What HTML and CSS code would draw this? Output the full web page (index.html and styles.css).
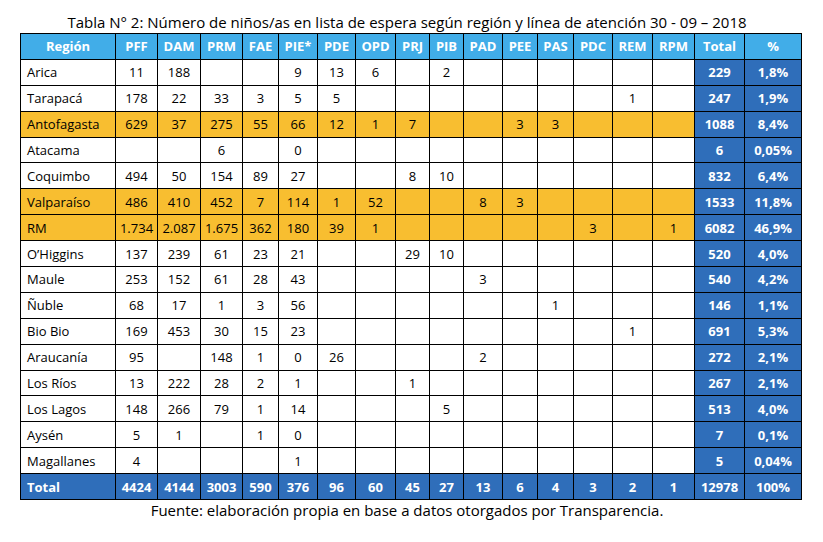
FILE: index.html
```html
<!DOCTYPE html>
<html lang="es">
<head>
<meta charset="utf-8">
<title>Tabla N° 2</title>
<link rel="stylesheet" href="styles.css">
</head>
<body>
<div class="page">
<p class="caption">Tabla N° 2: Número de niños/as en lista de espera según región y línea de atención 30 - 09 – 2018</p>
<table class="grid">
<colgroup>
<col class="c-reg"><col class="c42"><col class="c43"><col class="c42"><col class="c36"><col class="c39"><col class="c38"><col class="c40"><col class="c34"><col class="c34"><col class="c39"><col class="c35"><col class="c36"><col class="c39"><col class="c40"><col class="c42"><col class="c50"><col class="c57">
</colgroup>
<thead>
<tr class="head"><th>Región</th><th>PFF</th><th>DAM</th><th>PRM</th><th>FAE</th><th>PIE*</th><th>PDE</th><th>OPD</th><th>PRJ</th><th>PIB</th><th>PAD</th><th>PEE</th><th>PAS</th><th>PDC</th><th>REM</th><th>RPM</th><th>Total</th><th>%</th></tr>
</thead>
<tbody>
<tr><td class="reg">Arica</td><td>11</td><td>188</td><td></td><td></td><td>9</td><td>13</td><td>6</td><td></td><td>2</td><td></td><td></td><td></td><td></td><td></td><td></td><td class="tot">229</td><td class="tot">1,8%</td></tr>
<tr><td class="reg">Tarapacá</td><td>178</td><td>22</td><td>33</td><td>3</td><td>5</td><td>5</td><td></td><td></td><td></td><td></td><td></td><td></td><td></td><td>1</td><td></td><td class="tot">247</td><td class="tot">1,9%</td></tr>
<tr class="hl"><td class="reg">Antofagasta</td><td>629</td><td>37</td><td>275</td><td>55</td><td>66</td><td>12</td><td>1</td><td>7</td><td></td><td></td><td>3</td><td>3</td><td></td><td></td><td></td><td class="tot">1088</td><td class="tot">8,4%</td></tr>
<tr><td class="reg">Atacama</td><td></td><td></td><td>6</td><td></td><td>0</td><td></td><td></td><td></td><td></td><td></td><td></td><td></td><td></td><td></td><td></td><td class="tot">6</td><td class="tot">0,05%</td></tr>
<tr><td class="reg">Coquimbo</td><td>494</td><td>50</td><td>154</td><td>89</td><td>27</td><td></td><td></td><td>8</td><td>10</td><td></td><td></td><td></td><td></td><td></td><td></td><td class="tot">832</td><td class="tot">6,4%</td></tr>
<tr class="hl"><td class="reg">Valparaíso</td><td>486</td><td>410</td><td>452</td><td>7</td><td>114</td><td>1</td><td>52</td><td></td><td></td><td>8</td><td>3</td><td></td><td></td><td></td><td></td><td class="tot">1533</td><td class="tot">11,8%</td></tr>
<tr class="hl"><td class="reg">RM</td><td>1.734</td><td>2.087</td><td>1.675</td><td>362</td><td>180</td><td>39</td><td>1</td><td></td><td></td><td></td><td></td><td></td><td>3</td><td></td><td>1</td><td class="tot">6082</td><td class="tot">46,9%</td></tr>
<tr><td class="reg">O’Higgins</td><td>137</td><td>239</td><td>61</td><td>23</td><td>21</td><td></td><td></td><td>29</td><td>10</td><td></td><td></td><td></td><td></td><td></td><td></td><td class="tot">520</td><td class="tot">4,0%</td></tr>
<tr><td class="reg">Maule</td><td>253</td><td>152</td><td>61</td><td>28</td><td>43</td><td></td><td></td><td></td><td></td><td>3</td><td></td><td></td><td></td><td></td><td></td><td class="tot">540</td><td class="tot">4,2%</td></tr>
<tr><td class="reg">Ñuble</td><td>68</td><td>17</td><td>1</td><td>3</td><td>56</td><td></td><td></td><td></td><td></td><td></td><td></td><td>1</td><td></td><td></td><td></td><td class="tot">146</td><td class="tot">1,1%</td></tr>
<tr><td class="reg">Bio Bio</td><td>169</td><td>453</td><td>30</td><td>15</td><td>23</td><td></td><td></td><td></td><td></td><td></td><td></td><td></td><td></td><td>1</td><td></td><td class="tot">691</td><td class="tot">5,3%</td></tr>
<tr><td class="reg">Araucanía</td><td>95</td><td></td><td>148</td><td>1</td><td>0</td><td>26</td><td></td><td></td><td></td><td>2</td><td></td><td></td><td></td><td></td><td></td><td class="tot">272</td><td class="tot">2,1%</td></tr>
<tr><td class="reg">Los Ríos</td><td>13</td><td>222</td><td>28</td><td>2</td><td>1</td><td></td><td></td><td>1</td><td></td><td></td><td></td><td></td><td></td><td></td><td></td><td class="tot">267</td><td class="tot">2,1%</td></tr>
<tr><td class="reg">Los Lagos</td><td>148</td><td>266</td><td>79</td><td>1</td><td>14</td><td></td><td></td><td></td><td>5</td><td></td><td></td><td></td><td></td><td></td><td></td><td class="tot">513</td><td class="tot">4,0%</td></tr>
<tr><td class="reg">Aysén</td><td>5</td><td>1</td><td></td><td>1</td><td>0</td><td></td><td></td><td></td><td></td><td></td><td></td><td></td><td></td><td></td><td></td><td class="tot">7</td><td class="tot">0,1%</td></tr>
<tr><td class="reg">Magallanes</td><td>4</td><td></td><td></td><td></td><td>1</td><td></td><td></td><td></td><td></td><td></td><td></td><td></td><td></td><td></td><td></td><td class="tot">5</td><td class="tot">0,04%</td></tr>
</tbody>
<tfoot>
<tr class="sum"><td class="reg">Total</td><td>4424</td><td>4144</td><td>3003</td><td>590</td><td>376</td><td>96</td><td>60</td><td>45</td><td>27</td><td>13</td><td>6</td><td>4</td><td>3</td><td>2</td><td>1</td><td>12978</td><td>100%</td></tr>
</tfoot>
</table>
<p class="source">Fuente: elaboración propia en base a datos otorgados por Transparencia.</p>
</div>
</body>
</html>
```
FILE: styles.css
```css
html, body {
  margin: 0;
  padding: 0;
  background: #ffffff;
}
.page {
  width: 823px;
  padding-top: 12px;
  font-family: "Open Sans", "Liberation Sans", sans-serif;
  color: #000000;
}
.caption {
  width: 814px;
  margin: 0;
  text-align: center;
  font-size: 15px;
  line-height: 21px;
}
.source {
  width: 814px;
  margin: 0;
  text-align: center;
  font-size: 15px;
  line-height: 20px;
}
.grid {
  margin-left: 20px;
  width: 781px;
  table-layout: fixed;
  border-collapse: collapse;
  font-size: 13px;
}
.grid td, .grid th {
  border: 1px solid #000000;
  height: 25.9px;
  padding: 0;
  text-align: center;
  vertical-align: middle;
  box-sizing: border-box;
  white-space: nowrap;
  overflow: hidden;
}
.c-reg { width: 95px; }
.c34 { width: 34px; }
.c35 { width: 35px; }
.c36 { width: 36px; }
.c38 { width: 38px; }
.c39 { width: 39px; }
.c40 { width: 40px; }
.c42 { width: 42px; }
.c43 { width: 43px; }
.c50 { width: 50px; }
.c57 { width: 57px; }
.head th {
  background: #41ade8;
  color: #ffffff;
  font-weight: 700;
}
.grid td.reg {
  text-align: left;
  padding-left: 6px;
}
.hl td {
  background: #f8be30;
}
.grid td.tot {
  background: #2f6eba;
  color: #ffffff;
  font-weight: 700;
}
.sum td {
  background: #2f6eba;
  color: #ffffff;
  font-weight: 700;
}
```
